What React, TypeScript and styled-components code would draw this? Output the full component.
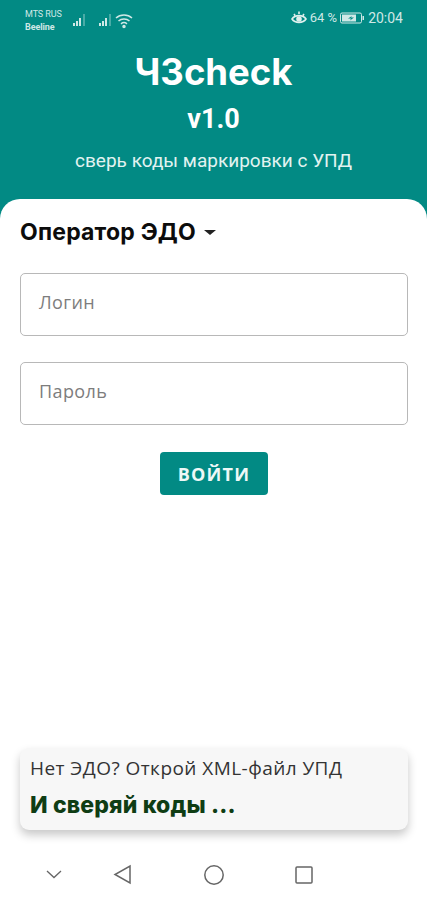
import React from "react";
import styled, { createGlobalStyle } from "styled-components";

const teal = "#028a84";

const Global = createGlobalStyle`
  html, body { margin: 0; padding: 0; background: #fff; }
  * { box-sizing: border-box; }
  body { font-family: "Inter", "Noto Sans", sans-serif; }
`;

const Page = styled.div`
  width: 427px;
  height: 900px;
  display: flex;
  flex-direction: column;
  background: ${teal};
  overflow: hidden;
`;

const StatusBar = styled.div`
  height: 36px;
  padding: 8px 24px 0 25px;
  display: flex;
  justify-content: space-between;
  align-items: flex-start;
  color: #cfe8e6;
  font-family: "Roboto", sans-serif;
`;

const StatusGroup = styled.div`
  display: flex;
  align-items: center;
  gap: ${(p: { $gap: number }) => p.$gap}px;
`;

const Carrier = styled.div`
  font-size: 9px;
  line-height: 13px;
  width: 47px;
  letter-spacing: -0.1px;
`;

const CarrierName = styled.div<{ $bold?: boolean }>`
  font-weight: ${(p) => (p.$bold ? 700 : 400)};
`;

const StatusText = styled.span<{ $size: number }>`
  font-size: ${(p) => p.$size}px;
  line-height: 20px;
`;

const SignalIcon = styled.svg<{ $left?: number }>`
  display: block;
  margin-left: ${(p) => p.$left ?? 0}px;
`;

const Header = styled.header`
  height: 163px;
  display: flex;
  flex-direction: column;
  align-items: center;
  color: #fff;
`;

const Title = styled.h1`
  margin: 14px 0 0;
  font-family: "Inter", sans-serif;
  font-size: 36.500px;
  line-height: 44px;
  font-weight: 700;
`;

const Version = styled.div`
  margin-top: 10px;
  font-family: "Roboto", sans-serif;
  font-size: 27px;
  line-height: 30px;
  font-weight: 700;
`;

const Subtitle = styled.div`
  margin-top: 17px;
  font-family: "Roboto", sans-serif;
  font-size: 19px;
  line-height: 20px;
  color: #e2f3f1;
`;

const Sheet = styled.main`
  flex: 1;
  background: #fff;
  border-radius: 20px 20px 0 0;
  display: flex;
  flex-direction: column;
  padding: 20px 19px 0 20px;
`;

const Dropdown = styled.div`
  display: flex;
  align-items: center;
  gap: 8px;
  height: 26px;
  font-family: "Inter", sans-serif;
  font-size: 23px;
  font-weight: 700;
  letter-spacing: 0.2px;
  color: #0c0c0c;
`;

const Caret = styled.span`
  width: 0;
  height: 0;
  border-left: 6px solid transparent;
  border-right: 6px solid transparent;
  border-top: 5px solid #222;
`;

const Field = styled.div<{ $top: number }>`
  margin-top: ${(p) => p.$top}px;
  height: 63px;
  border: 1.5px solid #b8b8b8;
  border-radius: 5px;
  padding: 0 18px 5px;
  display: flex;
  align-items: center;
  font-family: "Open Sans", sans-serif;
  font-size: 18px;
  letter-spacing: 0.4px;
  color: #7d7d7d;
`;

const Submit = styled.button`
  align-self: center;
  margin: 27px 0 0;
  width: 108px;
  height: 43px;
  border: 0;
  border-radius: 4px;
  background: ${teal};
  color: #eef8f7;
  font-family: "Open Sans", sans-serif;
  font-size: 18px;
  font-weight: 700;
  letter-spacing: 1.2px;
`;

const Toast = styled.aside`
  margin-top: auto;
  height: 82px;
  padding: 8px 10px;
  border-radius: 9px;
  background: #f7f7f7;
  box-shadow: 0 5px 10px rgba(0, 0, 0, 0.22);
`;

const ToastLine = styled.div`
  font-family: "Open Sans", sans-serif;
  font-size: 19px;
  line-height: 24px;
  letter-spacing: 0.45px;
  white-space: nowrap;
  color: #333;
`;

const ToastStrong = styled.div`
  margin-top: 12px;
  font-family: "Inter", sans-serif;
  font-size: 23px;
  line-height: 26px;
  font-weight: 800;
  letter-spacing: 0.15px;
  color: #0f3d14;
`;

const NavBar = styled.nav`
  height: 70px;
  margin: 0 -19px 0 -20px;
  padding: 20px 0 0 45px;
  display: flex;
  align-items: center;
`;

const NavIcon = styled.svg<{ $left: number }>`
  display: block;
  margin-left: ${(p) => p.$left}px;
  flex: none;
`;

const SignalBars = ({ left }: { left?: number }) => (
  <SignalIcon $left={left} width="15" height="14" viewBox="0 0 15 14" fill="#cfe8e6">
    <rect x="0" y="9" width="2" height="3" />
    <rect x="3" y="7" width="2" height="5" />
    <rect x="6" y="4" width="2" height="8" />
    <rect x="10" y="0" width="2" height="12" opacity=".35" />
  </SignalIcon>
);

export default function App() {
  return (
    <Page>
      <Global />
      <StatusBar>
        <StatusGroup $gap={1}>
          <Carrier>
            <CarrierName>MTS RUS</CarrierName>
            <CarrierName $bold>Beeline</CarrierName>
          </Carrier>
          <SignalBars />
          <SignalBars left={10} />
          <svg width="18" height="16" viewBox="0 0 18 16" fill="none" stroke="#cfe8e6" strokeWidth="1.500">
            <path d="M1 5C5.500 1 12.500 1 17 5" />
            <path d="M3.500 8C6.500 5.300 11.500 5.300 14.500 8" />
            <path d="M6 10.800C7.800 9.300 10.200 9.300 12 10.800" />
            <circle cx="9" cy="13.500" r="1" fill="#cfe8e6" />
          </svg>
        </StatusGroup>
        <StatusGroup $gap={3}>
          <svg width="16" height="14" viewBox="0 0 16 14" fill="none" stroke="#dff0ee" strokeWidth="1.600">
            <path d="M1 8C4 3.500 12 3.500 15 8C12 12.500 4 12.500 1 8Z" />
            <circle cx="8" cy="8" r="2" fill="#dff0ee" />
            <path d="M3 3L4.200 4.800M8 0.500V3M13 3L11.800 4.800" />
          </svg>
          <StatusText $size={13}>64 %</StatusText>
          <svg width="25" height="12" viewBox="0 0 25 12" fill="none">
            <rect x="0.500" y="1" width="21" height="10" rx="1.500" stroke="#cfe8e6" />
            <rect x="2" y="2.500" width="14" height="7" fill="#cfe8e6" />
            <rect x="22.500" y="4" width="1.500" height="4" fill="#cfe8e6" />
            <path d="M12 4L8 6.500H11L10 8.500L14 5.500H11Z" fill="#028a84" />
          </svg>
          <StatusText $size={14}>20:04</StatusText>
        </StatusGroup>
      </StatusBar>
      <Header>
        <Title>ЧЗcheck</Title>
        <Version>v1.0</Version>
        <Subtitle>сверь коды маркировки с УПД</Subtitle>
      </Header>
      <Sheet>
        <Dropdown>
          Оператор ЭДО
          <Caret />
        </Dropdown>
        <Field $top={28}>Логин</Field>
        <Field $top={26}>Пароль</Field>
        <Submit>ВОЙТИ</Submit>
        <Toast>
          <ToastLine>Нет ЭДО? Открой XML-файл УПД</ToastLine>
          <ToastStrong>И сверяй коды ...</ToastStrong>
        </Toast>
        <NavBar>
          <NavIcon $left={0} width="18" height="12" viewBox="0 0 18 12" fill="none" stroke="#666" strokeWidth="1.300">
            <path d="M2 2L9 8.500L16 2" />
          </NavIcon>
          <NavIcon $left={50} width="20" height="22" viewBox="0 0 20 22" fill="none" stroke="#666" strokeWidth="1.500">
            <path d="M17 2V19L2 10.500Z" />
          </NavIcon>
          <NavIcon $left={70} width="22" height="22" viewBox="0 0 22 22" fill="none" stroke="#666" strokeWidth="1.500">
            <circle cx="11" cy="11" r="9.200" />
          </NavIcon>
          <NavIcon $left={69} width="20" height="20" viewBox="0 0 20 20" fill="none" stroke="#666" strokeWidth="1.500">
            <rect x="2" y="2" width="16" height="16" rx="1" />
          </NavIcon>
        </NavBar>
      </Sheet>
    </Page>
  );
}
